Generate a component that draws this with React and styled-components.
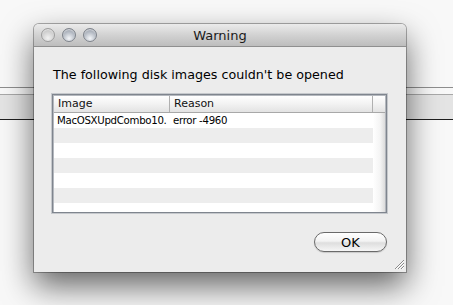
import React from "react";
import styled, { createGlobalStyle } from "styled-components";

const GlobalStyle = createGlobalStyle`
  html, body {
    margin: 0;
    padding: 0;
    background: #f7f7f7;
    font-family: "DejaVu Sans", "Liberation Sans", sans-serif;
  }
`;

const rows = [
  { image: "MacOSXUpdCombo10.", reason: "error -4960" },
  {},
  {},
  {},
  {},
  {},
  {},
];

export default function App() {
  return (
    <>
      <GlobalStyle />
      <Desktop>
        <BackStrip>
          <ThinLine />
          <Band />
        </BackStrip>

        <Window>
          <TitleBar>
            <Lights>
              <Light $dim />
              <Light />
              <Light />
            </Lights>
            <Title>Warning</Title>
          </TitleBar>

          <Body>
            <Message>The following disk images couldn't be opened</Message>

            <Table>
              <HeaderRow>
                <HeadCell>Image</HeadCell>
                <HeadCell>Reason</HeadCell>
                <HeadCell />
              </HeaderRow>
              {rows.map((r, i) => (
                <Row key={i} $odd={i % 2 === 1}>
                  <Cell>{r.image}</Cell>
                  <Cell>{r.reason}</Cell>
                  <Gutter />
                </Row>
              ))}
            </Table>

            <Footer>
              <OkButton>OK</OkButton>
            </Footer>
          </Body>

          <Grip width="11" height="11" viewBox="0 0 11 11">
            <path d="M10 1 L1 10 M10 4 L4 10 M10 7 L7 10" stroke="#8a8a8a" strokeWidth="1" />
            <path d="M10 2 L2 10 M10 5 L5 10 M10 8 L8 10" stroke="#ffffff" strokeWidth="1" />
          </Grip>
        </Window>
      </Desktop>
    </>
  );
}

const Desktop = styled.div`
  position: relative;
  width: 453px;
  height: 305px;
  overflow: hidden;
  background: #f8f8f8;
`;

const BackStrip = styled.div`
  padding-top: 87px;
  display: flex;
  flex-direction: column;
`;

const ThinLine = styled.div`
  height: 1px;
  background: #8e8e8e;
  margin-bottom: 6px;
`;

const Band = styled.div`
  height: 24px;
  background: #e4e4e4;
  border-top: 1px solid #a8a8a8;
  border-bottom: 1px solid #1e1e1e;
`;

const Window = styled.div`
  position: absolute;
  left: 34px;
  top: 24px;
  width: 372px;
  height: 248px;
  display: flex;
  flex-direction: column;
  background: #ececec;
  border-radius: 5px 5px 0 0;
  box-shadow: 0 0 0 1px rgba(0, 0, 0, 0.3), 0 14px 32px rgba(0, 0, 0, 0.6);
`;

const TitleBar = styled.div`
  position: relative;
  height: 22px;
  display: flex;
  align-items: center;
  justify-content: center;
  border-radius: 5px 5px 0 0;
  background: linear-gradient(#ebebeb, #d2d2d2 50%, #bdbdbd);
  border-bottom: 1px solid #8f8f8f;
`;

const Lights = styled.div`
  position: absolute;
  left: 7px;
  top: 4px;
  display: flex;
  gap: 7px;
`;

const Light = styled.div`
  width: 14px;
  height: 14px;
  border-radius: 50%;
  box-sizing: border-box;
  border: 1px solid ${(p) => (p.$dim ? "#9d9d9d" : "#7e838b")};
  background: ${(p) =>
    p.$dim
      ? "radial-gradient(circle at 50% 75%, #f2f2f2, #cfcfcf 60%, #b3b3b3)"
      : "radial-gradient(circle at 50% 78%, #f4f6f9, #b6bcc5 55%, #8a919b)"};
  box-shadow: inset 0 1px 1px rgba(255, 255, 255, 0.6);
`;

const Title = styled.div`
  font-size: 13px;
  color: #1a1a1a;
  padding-top: 1px;
`;

const Body = styled.div`
  flex: 1;
  display: flex;
  flex-direction: column;
  padding: 20px 19px 0 18px;
`;

const Message = styled.div`
  font-size: 12.7px;
  line-height: 16px;
  color: #000;
  margin-left: 1px;
  margin-bottom: 11px;
`;

const Table = styled.div`
  height: 117px;
  overflow: hidden;
  background: #fff;
  border: 1px solid #7f858e;
  box-shadow: 0 0 0 1px #c5c8cc, inset 0 0 0 1px #b4b8be;
  display: flex;
  flex-direction: column;
`;

const columns = "116px 203px 1fr";

const HeaderRow = styled.div`
  display: grid;
  grid-template-columns: ${columns};
  height: 16px;
  margin: 1px 1px 0 1px;
  background: linear-gradient(#ffffff, #f2f2f2 50%, #e3e3e3);
  border-bottom: 1px solid #a8a8a8;
`;

const HeadCell = styled.div`
  font-size: 11px;
  line-height: 16px;
  padding-left: 4px;
  color: #111;
  border-right: 1px solid #b0b0b0;
  &:last-child {
    border-right: none;
  }
`;

const Row = styled.div`
  display: grid;
  grid-template-columns: ${columns};
  height: 15px;
  flex-shrink: 0;
  margin: 0 1px;
  background: ${(p) => (p.$odd ? "#ededed" : "#ffffff")};
`;

const Cell = styled.div`
  font-size: 10.2px;
  letter-spacing: -0.3px;
  line-height: 15px;
  padding-left: 3px;
  color: #000;
  white-space: nowrap;
`;

const Gutter = styled.div`
  background: linear-gradient(90deg, #ffffff, #f4f4f4 60%, #dcdcdc);
`;

const Footer = styled.div`
  display: flex;
  justify-content: flex-end;
  padding-top: 19px;
`;

const OkButton = styled.button`
  width: 73px;
  height: 20px;
  padding: 0;
  border: 1px solid #6a6a6a;
  border-radius: 10px;
  font-family: "DejaVu Sans", "Liberation Sans", sans-serif;
  font-size: 13px;
  color: #000;
  background: linear-gradient(#ffffff, #f3f3f3 45%, #dedede 55%, #f6f6f6);
  box-shadow: 0 1px 1px rgba(0, 0, 0, 0.15);
`;

const Grip = styled.svg`
  position: absolute;
  right: 1px;
  bottom: 2px;
`;
